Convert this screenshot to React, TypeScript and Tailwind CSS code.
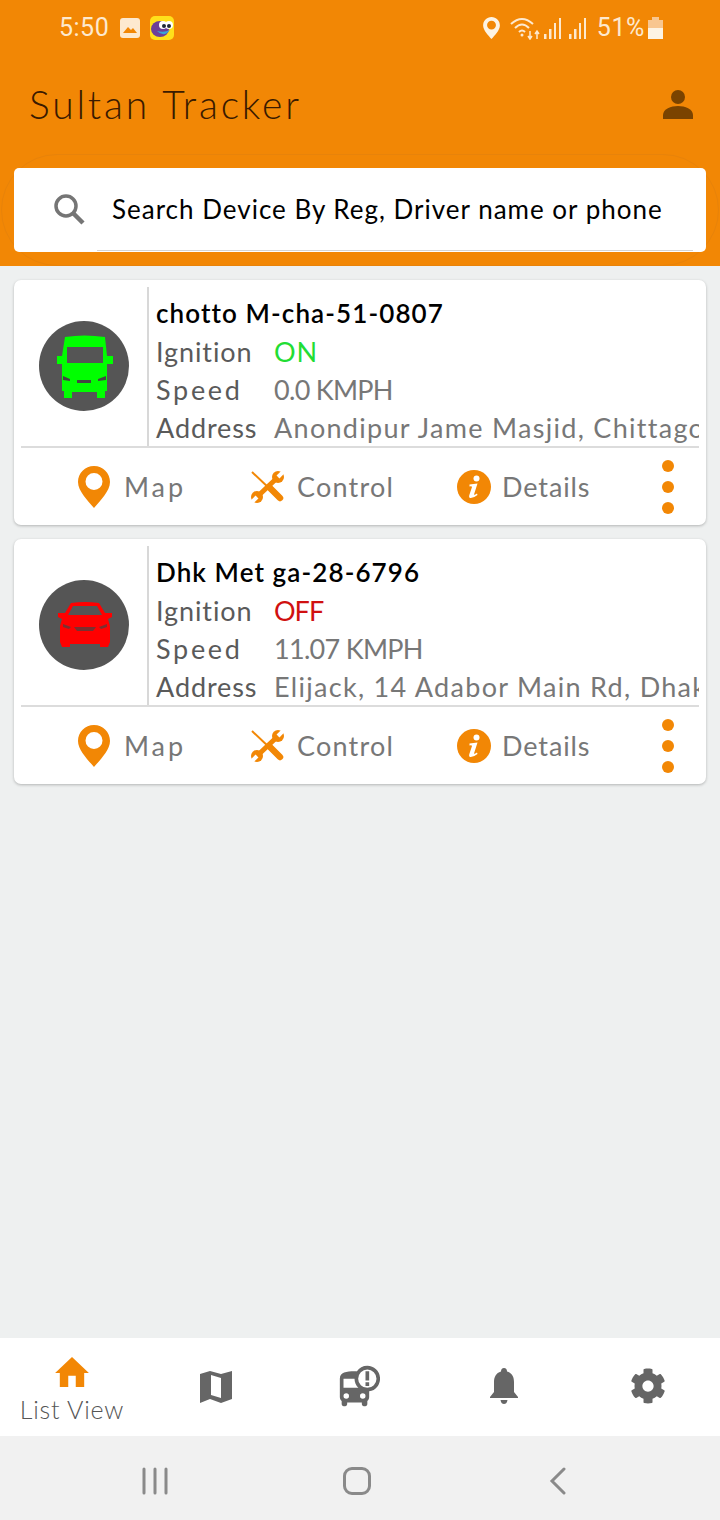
import React from "react";
import { FaCog } from "react-icons/fa";
import { MdBusAlert } from "react-icons/md";

function Van() {
  return (
    <svg viewBox="0 0 90 90" className="w-[90px] h-[90px]">
      <circle cx="45" cy="45" r="45" fill="#555555" />
      <path
        fillRule="evenodd"
        fill="#00ff00"
        d="M26 16Q45 13 66 16L68 35H74V43H68V70H66V77H58V71H33V77H25V70H23V43H18V35H23ZM28 26V42H64V26Z"
      />
      <path d="M24 55L31 58V60L24 59ZM67 55L59 58V60L67 59ZM38 59H52V62H38Z" fill="#444444" />
    </svg>
  );
}

function Car() {
  return (
    <svg viewBox="0 0 90 90" className="w-[90px] h-[90px]">
      <circle cx="45" cy="45" r="45" fill="#555555" />
      <path
        fillRule="evenodd"
        fill="#ff0000"
        d="M32 23Q46 21 60 23L66 33H73V37L69 39L71 46V62L69 67H61V64H31V67H23L21 62V46L23 39L19 37V33H26ZM34 26L29 35H63L58 26Z"
      />
      <path d="M24 44L32 47L30 49L24 47ZM68 44L60 47L62 49L68 47ZM35 47H57L54 51H38Z" fill="#7a3030" />
    </svg>
  );
}

function Marker(props: any) {
  return (
    <svg viewBox="0 0 32 42" className={props.className}>
      <path
        fillRule="evenodd"
        fill="currentColor"
        d="M16 0C25 0 32 7 32 16C32 25 22 35 16 42C10 35 0 25 0 16C0 7 7 0 16 0ZM16 7A8.5 8.5 0 1 0 16 24A8.5 8.5 0 1 0 16 7Z"
      />
    </svg>
  );
}

function Tools() {
  return (
    <svg viewBox="0 0 33 32" className="w-[33px] h-[32px]" fill="none" strokeLinecap="round">
      <path d="M1 1L18 17" stroke="#f28705" strokeWidth="2" strokeLinecap="butt" />
      <path d="M7 25L26 7" stroke="#f28705" strokeWidth="5" />
      <circle cx="27" cy="6" r="6" fill="#f28705" />
      <circle cx="6" cy="26" r="6" fill="#f28705" />
      <path d="M33 0L27 6" stroke="#ffffff" strokeWidth="4" strokeLinecap="butt" />
      <path d="M0 32L6 26" stroke="#ffffff" strokeWidth="4" strokeLinecap="butt" />
      <path d="M18 16L29 27" stroke="#f28705" strokeWidth="6.5" />
    </svg>
  );
}

function InfoIcon() {
  return (
    <svg viewBox="0 0 34 34" className="w-[34px] h-[34px]">
      <circle cx="17" cy="17" r="17" fill="#f28705" />
      <circle cx="19.5" cy="8.5" r="3" fill="#ffffff" />
      <path d="M12.5 14.5L20.5 13.5L17 24.5Q17 25.5 20 23.5L20.5 25Q16 28.5 13 28Q11.5 27.5 12.5 24.5L15 17Q15 16 12.5 16.5Z" fill="#ffffff" />
    </svg>
  );
}

function Device(props: any) {
  return (
    <div className="h-[245px] bg-white rounded-[7px] shadow-[0_1px_3px_rgba(0,0,0,0.25)] px-[7px] pt-[7px] flex flex-col">
      <div className="h-[161px] flex border-b-2 border-[#dcdcdc]">
        <div className="w-[126px] shrink-0 flex items-center justify-center pr-[1px] pb-[2px]">{props.icon}</div>
        <div className="flex-1 min-w-0 border-l-2 border-[#d8d8d8] pl-[7px] text-[27px] leading-[38px] whitespace-nowrap overflow-hidden">
          <div className="h-[46px] pt-[7px] text-[26px] font-semibold text-black tracking-[1.1px]">{props.name}</div>
          <div className="flex">
            <span className="w-[118px] shrink-0 text-[#5a5a5a] tracking-[0.9px]">Ignition</span>
            <span className={props.ignitionClass}>{props.ignition}</span>
          </div>
          <div className="flex">
            <span className="w-[118px] shrink-0 text-[#5a5a5a] tracking-[2.7px]">Speed</span>
            <span className="text-[#777777] tracking-[-0.7px]">{props.speed}</span>
          </div>
          <div className="flex">
            <span className="w-[118px] shrink-0 text-[#5a5a5a] tracking-[0.9px]">Address</span>
            <span className="text-[#777777] tracking-[1.3px]">{props.address}</span>
          </div>
        </div>
      </div>
      <div className="flex-1 flex items-center pl-[57px] text-[27px] text-[#777777]">
        <div className="w-[173px] flex items-center gap-[14px]">
          <Marker className="w-[32px] h-[42px] text-[#f28705]" />
          <span className="tracking-[2.9px] pt-[2px]">Map</span>
        </div>
        <div className="w-[206px] flex items-center gap-[13px]">
          <Tools />
          <span className="tracking-[1.2px] pt-[2px]">Control</span>
        </div>
        <div className="w-[205px] flex items-center gap-[11px]">
          <InfoIcon />
          <span className="tracking-[0.9px] pt-[2px]">Details</span>
        </div>
        <div className="flex flex-col gap-[9px]">
          <div className="w-[12px] h-[12px] rounded-full bg-[#f28705]" />
          <div className="w-[12px] h-[12px] rounded-full bg-[#f28705]" />
          <div className="w-[12px] h-[12px] rounded-full bg-[#f28705]" />
        </div>
      </div>
    </div>
  );
}

export default function App() {
  return (
    <div className="w-[720px] h-[1520px] flex flex-col bg-[#eef0f0] overflow-hidden font-['Lato','Open_Sans',sans-serif]">
      <div className="h-[266px] bg-[#f28705] relative px-[14px] shrink-0">
        <div className="absolute left-[1px] right-[1px] top-[154px] bottom-0 rounded-[56px] border border-[#e8830a]" />

        <div className="h-[56px] flex items-center justify-between pl-[45px] pr-[43px] font-['Roboto',sans-serif] text-[25px] text-[#fde9cf]">
          <div className="flex items-center">
            <span className="tracking-[0.5px]">5:50</span>
            <svg viewBox="0 0 20 20" className="w-[20px] h-[20px] ml-[11px]">
              <rect width="20" height="20" rx="3" fill="#fde9cf" />
              <path d="M3 15L8 9L11 12L13 10L17 15Z" fill="#f28705" />
            </svg>
            <svg viewBox="0 0 24 24" className="w-[24px] h-[24px] ml-[10px]">
              <rect width="24" height="24" rx="5" fill="#ffe01b" />
              <ellipse cx="10" cy="13" rx="9" ry="8" fill="#6c3f98" />
              <circle cx="13" cy="9" r="4" fill="#ffffff" />
              <circle cx="19" cy="9" r="4" fill="#ffffff" />
              <circle cx="14" cy="10" r="2" fill="#1f2937" />
              <circle cx="19" cy="10" r="2" fill="#1f2937" />
              <path d="M7 15Q14 22 20 14Q14 17 7 15Z" fill="#38a3d8" />
            </svg>
          </div>
          <div className="flex items-center">
            <Marker className="w-[17px] h-[22px] text-[#fdf3e3]" />
            <svg viewBox="0 0 32 24" className="w-[32px] h-[24px] ml-[10px]" fill="none" stroke="#fde9cf" strokeWidth="2">
              <path d="M1 8Q12 -2 23 8M5 12Q12 5 19 12M9 16Q12 13 15 16" />
              <circle cx="12" cy="19" r="1.5" fill="#fde9cf" stroke="none" />
              <path d="M20 15V22M18 20L20 23L22 20M27 23V16M25 18L27 15L29 18" strokeWidth="1.5" />
            </svg>
            <svg viewBox="0 0 20 24" className="w-[20px] h-[24px] ml-[1px]" fill="#fde9cf">
              <rect x="1" y="18" width="2.5" height="5" />
              <rect x="6" y="13" width="2.5" height="10" />
              <rect x="11" y="7" width="2" height="16" />
              <rect x="16" y="2" width="2" height="21" />
            </svg>
            <svg viewBox="0 0 20 24" className="w-[20px] h-[24px] ml-[5px]" fill="#fde9cf">
              <rect x="1" y="18" width="2.5" height="5" />
              <rect x="6" y="13" width="2.5" height="10" />
              <rect x="11" y="7" width="2" height="16" />
              <rect x="16" y="2" width="2" height="21" />
            </svg>
            <span className="ml-[9px] tracking-[0.6px]">51%</span>
            <svg viewBox="0 0 15 22" className="w-[15px] h-[22px] ml-[3px]">
              <path d="M4 0H11V3H15V22H0V3H4Z" fill="#f8c690" />
              <path d="M0 11H15V22H0Z" fill="#fdf3e3" />
            </svg>
          </div>
        </div>

        <div className="h-[112px] flex items-center justify-between pl-[15px] pr-[13px] pb-[16px]">
          <div className="text-[39px] tracking-[2.8px] text-[#3a1a00] font-light">Sultan Tracker</div>
          <svg viewBox="0 0 30 29" className="w-[30px] h-[29px]" fill="#7a4300">
            <circle cx="15" cy="7" r="7" />
            <path d="M0 29V25C0 19 8 16 15 16S30 19 30 25V29Z" />
          </svg>
        </div>

        <div className="relative h-[84px] bg-white rounded-[5px] flex items-center pl-[39px] pb-[2px]">
          <svg viewBox="0 0 32 32" className="w-[32px] h-[32px] mr-[27px]" fill="none" stroke="#757575">
            <circle cx="13" cy="13" r="10" strokeWidth="3.5" />
            <path d="M20 20L30 30" strokeWidth="4.5" />
          </svg>
          <span className="text-[26px] tracking-[1px] text-black whitespace-nowrap">
            Search Device By Reg, Driver name or phone
          </span>
          <div className="absolute left-[83px] right-[13px] bottom-[1px] h-[1px] bg-[#d4d4d4]" />
        </div>
      </div>

      <div className="flex-1 flex flex-col gap-[14px] px-[14px] pt-[14px]">
        <Device
          icon={<Van />}
          name="chotto M-cha-51-0807"
          ignition="ON"
          ignitionClass="text-[#22dd33] tracking-[0.9px]"
          speed="0.0 KMPH"
          address="Anondipur Jame Masjid, Chittagong"
        />
        <Device
          icon={<Car />}
          name="Dhk Met ga-28-6796"
          ignition="OFF"
          ignitionClass="text-[#d01010] tracking-[-1px]"
          speed="11.07 KMPH"
          address="Elijack, 14 Adabor Main Rd, Dhaka"
        />
      </div>

      <div className="h-[98px] bg-white grid grid-cols-5 shrink-0 text-[#666666]">
        <div className="flex flex-col items-center pt-[19px]">
          <svg viewBox="0 0 36 32" className="w-[34px] h-[30px]" fill="#f28705">
            <path d="M18 0L36 17H31V32H22V20H14V32H5V17H0Z" />
          </svg>
          <span className="text-[25px] leading-[30px] mt-[7px] tracking-[0.8px] font-light text-[#555555]">List View</span>
        </div>
        <div className="flex items-center justify-center pb-[1px]">
          <svg viewBox="0 0 32 32" className="w-[32px] h-[32px]" fill="#666666">
            <path fillRule="evenodd" d="M0 3L10 0L21 3L32 0V28L21 32L10 28L0 32ZM11 4V24L21 27V7Z" />
          </svg>
        </div>
        <div className="flex items-center justify-center pb-[3px]">
          <MdBusAlert className="w-[44px] h-[44px]" />
        </div>
        <div className="flex items-center justify-center pb-[2px]">
          <svg viewBox="0 0 30 36" className="w-[30px] h-[36px]" fill="#666666">
            <path d="M15 0C17 0 18 1.5 18 3.5C23 5 25 9 25 14V24L29 29V30H1V29L5 24V14C5 9 7 5 12 3.5C12 1.5 13 0 15 0ZM11.5 32H18.5C18 35 16.5 36 15 36C13.5 36 12 35 11.5 32Z" />
          </svg>
        </div>
        <div className="flex items-center justify-center pb-[2px]">
          <FaCog className="w-[36px] h-[36px]" />
        </div>
      </div>

      <div className="h-[84px] bg-[#f1f1f1] flex items-center pl-[54px] pt-[5px] shrink-0">
        <div className="w-[202px] flex justify-center">
          <svg viewBox="0 0 28 28" className="w-[28px] h-[28px]" fill="none" stroke="#8a8a8a" strokeWidth="3" strokeLinecap="round">
            <path d="M3 2V26M14 2V26M25 2V26" />
          </svg>
        </div>
        <div className="w-[202px] flex justify-center">
          <div className="w-[28px] h-[28px] rounded-[9px] border-[3px] border-[#8a8a8a]" />
        </div>
        <div className="w-[200px] flex justify-center">
          <svg viewBox="0 0 18 28" className="w-[18px] h-[28px]" fill="none" stroke="#8a8a8a" strokeWidth="3" strokeLinecap="round">
            <path d="M15 2L3 14L15 26" />
          </svg>
        </div>
      </div>
    </div>
  );
}
